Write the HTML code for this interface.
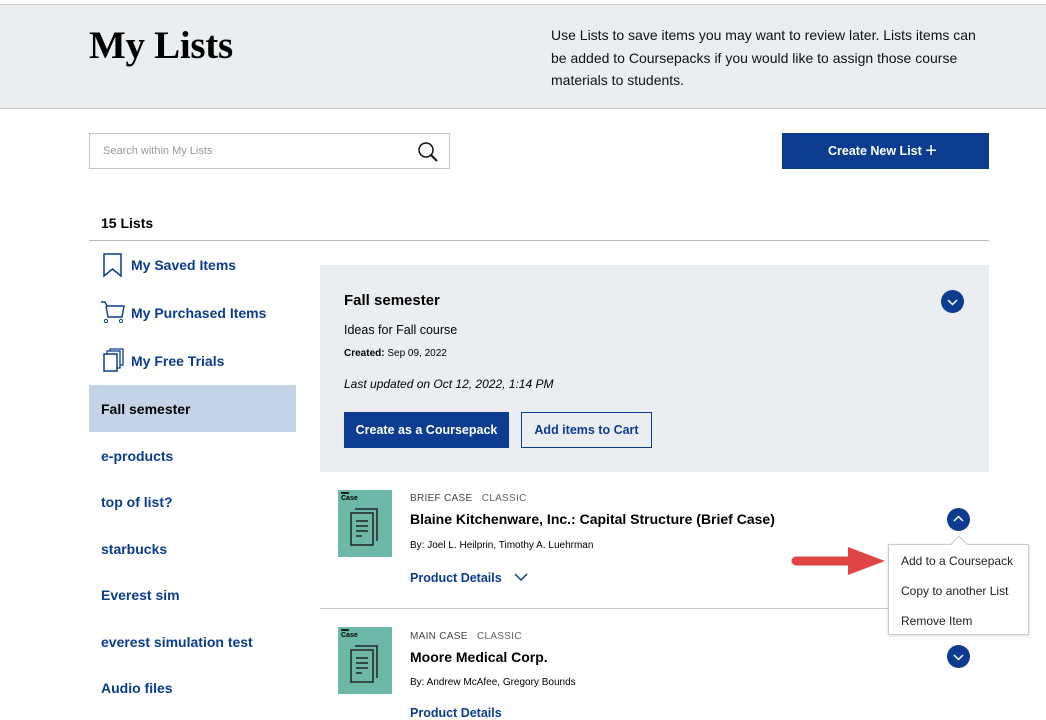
<!DOCTYPE html>
<html><head><style>
*{margin:0;padding:0;box-sizing:border-box}
body{width:1046px;height:713px;overflow:hidden;background:#fff;font-family:"Liberation Sans",sans-serif;position:relative;color:#000}
.a{position:absolute}
.blue{color:#0b3c8f}
.nav{position:absolute;left:101px;font-size:14px;font-weight:bold;color:#0b3c8f}
.btn{position:absolute;font-size:12.5px;font-weight:bold}
.thumb{position:absolute;left:338px;width:54px;height:67px;background:#6cb8a6}
.thumb .l{position:absolute;left:3px;top:2px;width:8px;height:1.5px;background:#222}
.thumb .t{position:absolute;left:3px;top:5px;font-size:7px;font-weight:bold}
.circ{position:absolute;width:23px;height:23px;border-radius:50%;background:#0b3c8f}
</style></head><body>
<div class="a" style="left:0;top:4px;width:1046px;height:105px;background:#ebeef1;border-top:1px solid #c8c8c8;border-bottom:1px solid #c8c8c8"></div>
<div class="a" style="left:89px;top:23px;font-family:'Liberation Serif',serif;font-weight:bold;font-size:39px;letter-spacing:-0.3px">My Lists</div>
<div class="a" style="left:551px;top:24px;width:440px;font-size:14px;line-height:22.5px;color:#111">Use Lists to save items you may want to review later. Lists items can be added to Coursepacks if you would like to assign those course materials to students.</div>
<div class="a" style="left:89px;top:133px;width:361px;height:36px;border:1px solid #c4c4c4"></div>
<div class="a" style="left:103px;top:145px;font-size:11px;color:#999">Search within My Lists</div>
<svg class="a" style="left:417px;top:141px" width="22" height="22" viewBox="0 0 22 22"><circle cx="9" cy="9" r="7" fill="none" stroke="#111" stroke-width="1.5"/><path d="M14 14l6 6" stroke="#111" stroke-width="2"/></svg>
<div class="a" style="left:782px;top:133px;width:207px;height:36px;background:#0b3c8f;color:#fff;font-size:12.5px;font-weight:bold;line-height:36px;padding-left:46px">Create New List <span style="font-weight:normal;font-size:20px;vertical-align:-2px">+</span></div>
<div class="a" style="left:101px;top:215px;font-size:14px;font-weight:bold">15 Lists</div>
<div class="a" style="left:89px;top:240px;width:900px;height:1px;background:#bbb"></div>
<svg class="a" style="left:103px;top:253px" width="20" height="25"><path d="M1 1h17v22l-8.5-7L1 23z" fill="none" stroke="#0b3c8f" stroke-width="1.5"/></svg>
<div class="nav" style="left:131px;top:257px">My Saved Items</div>
<svg class="a" style="left:100px;top:300px" width="26" height="24"><path d="M1 2h4l2 4h17l-2 11H8L6 6" fill="none" stroke="#0b3c8f" stroke-width="1.4"/><circle cx="6" cy="21" r="1.6" fill="none" stroke="#0b3c8f"/><circle cx="21" cy="21" r="1.6" fill="none" stroke="#0b3c8f"/></svg>
<div class="nav" style="left:131px;top:305px">My Purchased Items</div>
<svg class="a" style="left:103px;top:348px" width="22" height="24"><rect x="1" y="6" width="13" height="17" fill="none" stroke="#0b3c8f" stroke-width="1.5"/><path d="M4 6V3h13v17h-3M7 3V1h13v16h-3" fill="none" stroke="#0b3c8f" stroke-width="1.3"/></svg>
<div class="nav" style="left:131px;top:353px">My Free Trials</div>
<div class="a" style="left:89px;top:385px;width:207px;height:47px;background:#c5d3e8"></div>
<div class="nav" style="top:401px;color:#000">Fall semester</div>
<div class="nav" style="top:448px">e-products</div>
<div class="nav" style="top:494px">top of list?</div>
<div class="nav" style="top:541px">starbucks</div>
<div class="nav" style="top:587px">Everest sim</div>
<div class="nav" style="top:634px">everest simulation test</div>
<div class="nav" style="top:680px">Audio files</div>
<div class="a" style="left:320px;top:265px;width:669px;height:207px;background:#ebeef1"></div>
<div class="a" style="left:344px;top:292px;font-size:15px;font-weight:bold">Fall semester</div>
<div class="circ" style="left:941px;top:290px"><svg width="23" height="23"><path d="M7 10l4.5 4.5L16 10" fill="none" stroke="#fff" stroke-width="1.5"/></svg></div>
<div class="a" style="left:344px;top:323px;font-size:12.5px">Ideas for Fall course</div>
<div class="a" style="left:344px;top:348px;font-size:10px"><b>Created:</b> Sep 09, 2022</div>
<div class="a" style="left:344px;top:377px;font-size:12px;font-style:italic">Last updated on Oct 12, 2022, 1:14 PM</div>
<div class="btn" style="left:344px;top:412px;width:165px;height:36px;background:#0b3c8f;color:#fff;line-height:36px;text-align:center">Create as a Coursepack</div>
<div class="btn" style="left:521px;top:412px;width:131px;height:36px;border:1px solid #0b3c8f;color:#0b3c8f;line-height:34px;text-align:center">Add items to Cart</div>
<div class="thumb" style="top:490px"><div class="l"></div><div class="t">Case</div><svg class="a" style="left:10px;top:16px" width="34" height="44"><path d="M7 3h22v32" fill="none" stroke="#222" stroke-width="1.5"/><rect x="3" y="7" width="22" height="32" fill="none" stroke="#222" stroke-width="1.5"/><path d="M8 15h12M8 20h12M8 25h12M8 30h6" stroke="#222" stroke-width="1.5"/></svg></div>
<div class="a" style="left:410px;top:493px;font-size:10px;color:#444;letter-spacing:.3px">BRIEF CASE &nbsp;&nbsp;<span style="color:#666">CLASSIC</span></div>
<div class="a" style="left:410px;top:511px;font-size:14px;font-weight:bold">Blaine Kitchenware, Inc.: Capital Structure (Brief Case)</div>
<div class="a" style="left:410px;top:540px;font-size:10px">By: Joel L. Heilprin, Timothy A. Luehrman</div>
<div class="a blue" style="left:410px;top:571px;font-size:12.5px;font-weight:bold">Product Details <svg width="16" height="10" style="margin-left:8px"><path d="M2 2l6 6 6-6" fill="none" stroke="#0b3c8f" stroke-width="1.5"/></svg></div>
<div class="circ" style="left:947px;top:508px"><svg width="23" height="23"><path d="M7 13l4.5-4.5L16 13" fill="none" stroke="#fff" stroke-width="1.5"/></svg></div>
<div class="a" style="left:320px;top:608px;width:669px;height:1px;background:#ccc"></div>
<div class="thumb" style="top:627px"><div class="l"></div><div class="t">Case</div><svg class="a" style="left:10px;top:16px" width="34" height="44"><path d="M7 3h22v32" fill="none" stroke="#222" stroke-width="1.5"/><rect x="3" y="7" width="22" height="32" fill="none" stroke="#222" stroke-width="1.5"/><path d="M8 15h12M8 20h12M8 25h12M8 30h6" stroke="#222" stroke-width="1.5"/></svg></div>
<div class="a" style="left:410px;top:631px;font-size:10px;color:#444;letter-spacing:.3px">MAIN CASE &nbsp;&nbsp;<span style="color:#666">CLASSIC</span></div>
<div class="a" style="left:410px;top:649px;font-size:14px;font-weight:bold">Moore Medical Corp.</div>
<div class="a" style="left:410px;top:677px;font-size:10px">By: Andrew McAfee, Gregory Bounds</div>
<div class="a blue" style="left:410px;top:706px;font-size:12.5px;font-weight:bold">Product Details</div>
<div class="circ" style="left:947px;top:645px"><svg width="23" height="23"><path d="M7 10l4.5 4.5L16 10" fill="none" stroke="#fff" stroke-width="1.5"/></svg></div>
<div class="a" style="left:888px;top:544px;width:141px;height:91px;background:#fff;border:1px solid #ccc;box-shadow:0 1px 3px rgba(0,0,0,.15)"></div>
<div class="a" style="left:953px;top:538px;width:12px;height:12px;background:#fff;border-left:1px solid #ccc;border-top:1px solid #ccc;transform:rotate(45deg)"></div>
<div class="a" style="left:901px;top:554px;font-size:12px;color:#222">Add to a Coursepack</div>
<div class="a" style="left:901px;top:584px;font-size:12px;color:#222">Copy to another List</div>
<div class="a" style="left:901px;top:614px;font-size:12px;color:#222">Remove Item</div>
<svg class="a" style="left:788px;top:545px" width="100" height="32"><path d="M8 16H62" stroke="#e04444" stroke-width="9" stroke-linecap="round"/><path d="M60 2L97 16L60 30z" fill="#e04444"/></svg>
</body></html>
